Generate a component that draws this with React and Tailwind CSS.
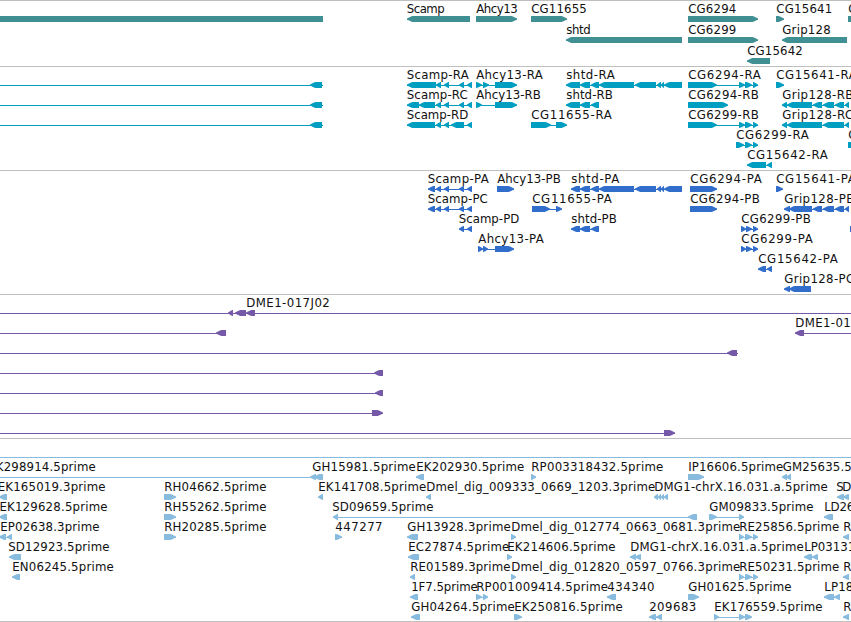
import React from "react";

// Feature: [row, strand, exons, label, labelStart, labelEnd, lineStart, lineEnd]
const L = -1;
const R = 1;

const scampTail = [[444, 449], [459, 464], [467, 472]];
const shtdStart = [[566, 580], [580, 590], [591, 599]];
const shtdEnd = [[599, 634], [635, 656], [657, 661], [661, 664], [664, 682]];
const cgExons = [[739, 745], [745, 752], [753, 758]];

const genes = [
  [0, 0, [[0, 323]]],
  [0, L, [[407, 470]], "Scamp", 407, 444.5],
  [0, R, [[476, 517]], "Ahcy13", 476.5, 517.5],
  [0, R, [[531, 567]], "CG11655", 531.5, 586.5],
  [1, L, [[566, 682]], "shtd", 566.5, 590.5],
  [0, R, [[688, 758]], "CG6294", 688.5, 736],
  [1, R, [[688, 758]], "CG6299", 688.5, 736],
  [2, L, [[747, 770]], "CG15642", 747.5, 802.5],
  [0, R, [[776, 784]], "CG15641", 776.5, 832],
  [1, L, [[782, 847]], "Grip128", 782.5, 830.5],
  [0, 0, [[848, 860]], "C", 848.5, 856],
];

const transcripts = [
  [0, L, [[310, 322]], "", 0, 0, 0, 323],
  [1, L, [[310, 322]], "", 0, 0, 0, 323],
  [2, L, [[310, 322]], "", 0, 0, 0, 323],
  [0, L, [[407, 436], [436, 441], ...scampTail], "Scamp-RA", 407, 468.5],
  [1, L, [[407, 419], [419, 435], [436, 441], ...scampTail], "Scamp-RC", 407, 467.5],
  [2, L, [[407, 435], [436, 441], [444, 449], [451, 464], [467, 472]], "Scamp-RD", 407, 468],
  [0, R, [[476, 482], [483, 489], [495, 517]], "Ahcy13-RA", 476.5, 542.5],
  [1, R, [[476, 482], [495, 517]], "Ahcy13-RB", 476.5, 540.5],
  [2, R, [[531, 551], [556, 567]], "CG11655-RA", 531.5, 611.5],
  [0, L, [...shtdStart, ...shtdEnd], "shtd-RA", 566.5, 614.5],
  [1, L, shtdStart, "shtd-RB", 566.5, 612.5],
  [0, R, [[688, 717], ...cgExons], "CG6294-RA", 688.5, 760.5],
  [1, R, [[688, 728]], "CG6294-RB", 688.5, 758.5],
  [2, R, [[688, 717], ...cgExons], "CG6299-RB", 688.5, 758.5],
  [3, R, [[736, 744], [745, 752], [753, 758]], "CG6299-RA", 736.5, 808.5],
  [4, L, [[747, 766], [767, 772]], "CG15642-RA", 747.5, 827.5],
  [0, R, [[776, 784]], "CG15641-RA", 776.5, 856.5],
  [1, L, [[782, 787], [787, 812], [813, 822], [823, 834], [835, 844], [845, 849]], "Grip128-RB", 782.5, 853],
  [2, L, [[782, 787], [787, 822], [823, 844], [845, 849]], "Grip128-RC", 782.5, 853],
  [3, 0, [[848, 860]], "C", 848.5, 856],
];

const proteins = [
  [0, L, [[428, 435], [436, 441], ...scampTail], "Scamp-PA", 428, 488.5],
  [1, L, [[428, 435], [436, 441], ...scampTail], "Scamp-PC", 428, 487.5],
  [2, L, [[459, 464], [467, 472]], "Scamp-PD", 459, 519],
  [0, R, [[497, 514]], "Ahcy13-PB", 497.5, 560.5],
  [3, R, [[478, 483], [483, 488], [495, 514]], "Ahcy13-PA", 478.5, 543.5],
  [1, R, [[532, 550], [556, 562]], "CG11655-PA", 532.5, 611.5],
  [0, L, [[571, 580], [580, 590], [591, 599], ...shtdEnd], "shtd-PA", 571.5, 619],
  [2, L, [[571, 580], [580, 590], [591, 599]], "shtd-PB", 571.5, 616.5],
  [0, R, [[690, 717]], "CG6294-PA", 690.5, 761.5],
  [1, R, [[690, 717]], "CG6294-PB", 690.5, 759.5],
  [2, R, [[741, 746], [746, 752], [753, 758]], "CG6299-PB", 741.5, 810.5],
  [3, R, [[741, 746], [746, 752], [753, 758]], "CG6299-PA", 741.5, 812.5],
  [4, L, [[758, 766], [767, 772]], "CG15642-PA", 758.5, 837.5],
  [0, R, [[776, 783]], "CG15641-PA", 776.5, 855.5],
  [1, L, [[784, 790], [789, 812], [813, 822], [823, 834], [835, 844], [845, 849]], "Grip128-PB", 784.5, 854],
  [5, L, [[784, 790], [789, 811]], "Grip128-PC", 784.5, 854],
  [2, 0, [[850, 860]]],
];

const clones = [
  [0, L, [[228, 233], [235, 246], [246, 255]], "DME1-017J02", 246.5, 329.5, 0, 851],
  [1, L, [[216, 226]], "", 0, 0, 0, 226],
  [1, L, [[795, 804]], "DME1-01", 795.5, 850.5, 795, 851],
  [2, L, [[727, 737]], "", 0, 0, 0, 738],
  [3, L, [[374, 383]], "", 0, 0, 0, 383],
  [4, L, [[375, 383]], "", 0, 0, 0, 383],
  [5, R, [[372, 383]], "", 0, 0, 0, 383],
  [6, R, [[664, 675]], "", 0, 0, 0, 675],
];

const ests = [
  [0, L, [], "EK298914.5prime", -11.5, 95.5],
  [0, L, [[310, 316], [314, 323]], "GH15981.5prime", 312.5, 415.5, 0, 323],
  [0, L, [[416, 424]], "EK202930.5prime", 416.5, 524],
  [0, R, [[531, 536]], "RP003318432.5prime", 531.5, 663],
  [0, R, [[688, 704]], "IP16606.5prime", 688.5, 783],
  [0, L, [[782, 787], [786, 791]], "GM25635.5prime", 783, 886.5],

  [1, L, [[-1, 7]], "EK165019.3prime", -2, 105.3],
  [1, R, [[164, 176]], "RH04662.5prime", 164.5, 266.3],
  [1, L, [[318, 323]], "EK141708.5prime", 318.5, 426],
  [1, L, [[426, 431]], "Dmel_dig_009333_0669_1203.3prime", 426.5, 655],
  [1, L, [[654, 658], [658, 661], [661, 664], [664, 668]], "DMG1-chrX.16.031.a.5prime", 654.5, 827.5],
  [1, L, [[837, 844], [843, 849]], "SD", 836.5, 851],

  [2, L, [[-1, 7]], "EK129628.5prime", -0.3, 107.3],
  [2, R, [[164, 176]], "RH55262.5prime", 164.5, 266.3],
  [2, L, [[333, 338], [688, 697]], "SD09659.5prime", 332.5, 433.3],
  [2, R, [[709, 717], [739, 744]], "GM09833.5prime", 709.5, 813.3],
  [2, L, [[824, 833]], "LD26", 824.5, 854],

  [3, L, [[-1, 6], [7, 12]], "EP02638.3prime", 0.5, 99.3],
  [3, R, [[164, 176]], "RH20285.5prime", 164.5, 266.3],
  [3, R, [[335, 342]], "447277", 335.5, 382.3],
  [3, L, [[407, 418]], "GH13928.3prime", 407.5, 510.5],
  [3, R, [[511, 516]], "Dmel_dig_012774_0663_0681.3prime", 511.5, 740],
  [3, R, [[739, 744], [745, 752], [753, 758]], "RE25856.5prime", 739.5, 839],
  [3, L, [[843, 849]], "R", 843.5, 851],

  [4, L, [[9, 21]], "SD12923.5prime", 8.5, 109.3],
  [4, L, [[408, 419]], "EC27874.5prime", 408.5, 509],
  [4, R, [[507, 512]], "EK214606.5prime", 507.5, 615.3],
  [4, L, [[630, 636], [635, 641]], "DMG1-chrX.16.031.a.5prime", 630.5, 803.5],
  [4, L, [[804, 812], [812, 818]], "LP03131", 804.5, 855],

  [5, L, [[12, 20]], "EN06245.5prime", 12.5, 113.5],
  [5, L, [[410, 415]], "RE01589.3prime", 410.5, 510.3],
  [5, R, [[511, 516]], "Dmel_dig_012820_0597_0766.3prime", 511.5, 740],
  [5, R, [[739, 744], [745, 752], [753, 758]], "RE50231.5prime", 739.5, 839],
  [5, L, [[843, 849]], "R", 843.5, 851],

  [6, L, [[410, 418]], "1F7.5prime", 411.5, 477.5],
  [6, R, [[476, 482], [483, 488]], "RP001009414.5prime", 476.5, 607.8],
  [6, L, [[607, 616]], "434340", 607.5, 654.3],
  [6, R, [[688, 699]], "GH01625.5prime", 688.5, 791.3],
  [6, L, [[824, 834], [834, 840]], "LP18", 824.5, 853],

  [7, L, [[411, 420]], "GH04264.5prime", 411.5, 514.5],
  [7, R, [[514, 522]], "EK250816.5prime", 514.5, 622.5],
  [7, L, [[649, 656], [656, 662]], "209683", 649.5, 696],
  [7, R, [[714, 719], [739, 745], [745, 752]], "EK176559.5prime", 714.5, 822.3],
  [7, L, [[843, 849]], "R", 843.5, 851],
];

function exonPath(a, b, y, strand) {
  if (strand === 0) return `M${a} ${y}H${b}V${y + 6}H${a}Z`;
  const tip = strand === L ? a : b;
  const back = strand === L ? b : a;
  const s = strand === L ? 1 : -1;
  const k = Math.min(1, (b - a) / 6);
  const p = (d) => tip + s * d * k;
  return `M${tip} ${y + 2.6}L${p(2)} ${y + 1.6}L${p(4)} ${y + 0.4}L${p(5.5)} ${y}H${back}V${y + 6}H${p(5.5)}L${p(4)} ${y + 5.4}L${p(2)} ${y + 4.4}L${tip} ${y + 3.6}Z`;
}

function Track({ features, height, color, top, pitch, className = "", children }) {
  return (
    <section className={`shrink-0 border-t border-[#bfbfbf] ${className}`}>
      <svg width="851" height={height} className="block overflow-hidden">
        {children}
        {features.map(([row, strand, exons, label, lx, lend, from, to], i) => {
          const y = top + row * pitch;
          const start = from ?? exons[0]?.[0] ?? 0;
          const end = to ?? exons[exons.length - 1]?.[1] ?? 0;
          return (
            <g key={i} fill={color}>
              {end > start && <rect x={start} y={y + 3} width={end - start} height="1" />}
              {exons.map(([a, b], j) => (
                <path key={j} d={exonPath(a, b, y, strand)} />
              ))}
              {label && (
                <text
                  x={lx - 0.3}
                  y={y - 3}
                  textLength={lend - lx + 0.6}
                  lengthAdjust="spacing"
                  className="fill-[#111111] text-[11.75px]"
                >
                  {label}
                </text>
              )}
            </g>
          );
        })}
      </svg>
    </section>
  );
}

export default function App() {
  return (
    <main className="flex h-[622px] w-[851px] flex-col overflow-hidden bg-white font-['DejaVu_Sans',sans-serif]">
      <Track features={genes} height={65} color="#3f8f93" top={15} pitch={21} />
      <Track features={transcripts} height={103} color="#009fc1" top={15} pitch={20} />
      <Track features={proteins} height={123} color="#316dcb" top={15} pitch={20} />
      <Track features={clones} height={143} color="#7658a8" top={15} pitch={20} />
      <Track features={ests} height={182} color="#87bcde" top={35} pitch={20} className="border-b">
        <rect x="0" y="18" width="851" height="1" fill="#87bcde" />
      </Track>
    </main>
  );
}
